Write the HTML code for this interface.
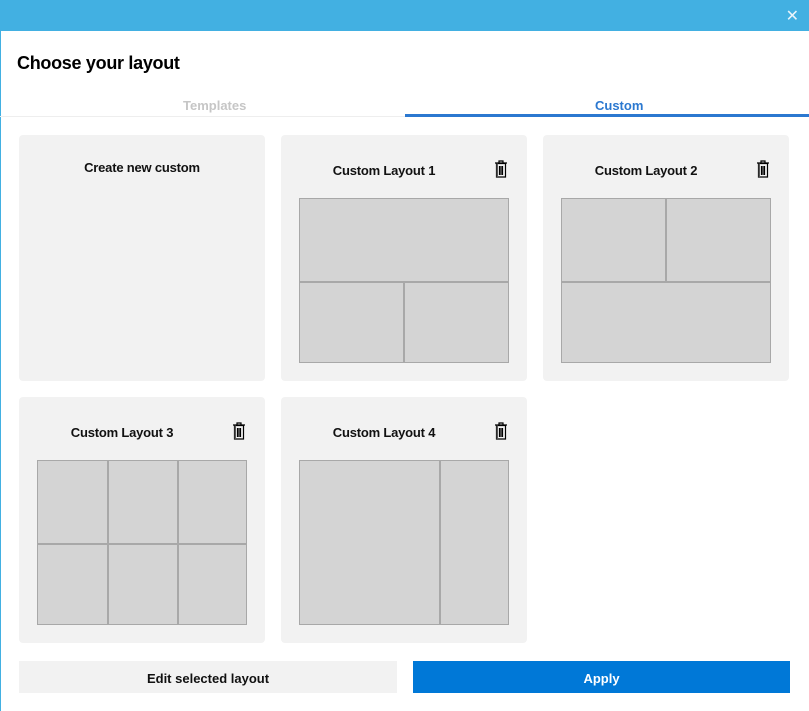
<!DOCTYPE html>
<html><head><style>
body{margin:0;width:809px;height:711px;position:relative;background:#fff;font-family:"Liberation Sans",sans-serif;overflow:hidden}
.bar{position:absolute;left:0;top:0;width:809px;height:31px;background:#42b0e2}
.lb{position:absolute;left:0;top:31px;width:1px;height:680px;background:#42b0e2}
.x{position:absolute;right:10px;top:6px;color:#e8f4fb;font-size:16px}
h1{position:absolute;left:17px;top:53px;margin:0;font-size:18px;font-weight:bold;color:#000;letter-spacing:-0.3px}
.tab{position:absolute;top:98px;font-size:13px;font-weight:bold}
.card{position:absolute;width:246px;height:246px;background:#f2f2f2;border-radius:4px}
.t{position:absolute;left:0;width:206px;text-align:center;top:28px;font-size:13px;font-weight:bold;color:#111;letter-spacing:-0.2px}
.g{position:absolute;left:18px;top:63px;width:210px;height:165px;background:#d4d4d4;border:1px solid #a8a8a8;box-sizing:border-box}
.g i{position:absolute;background:#a8a8a8}
.tr{position:absolute;left:212px;top:25px}
.btn{position:absolute;top:661px;height:32px;line-height:35px;text-align:center;font-size:13px;font-weight:bold}
</style></head><body>
<div class="bar"></div><div class="lb"></div><div class="x">✕</div>
<h1>Choose your layout</h1>
<div class="tab" style="left:183px;color:#c6c6c6">Templates</div>
<div class="tab" style="left:595px;color:#2b78d0">Custom</div>
<div style="position:absolute;left:0;top:116px;width:405px;height:1px;background:#eee"></div>
<div style="position:absolute;left:405px;top:114px;width:404px;height:3px;background:#2b78d0"></div>

<svg width="0" height="0" style="position:absolute"><defs><g id="tr"><path d="M2 3h12M6 3V1h4v2M3.5 3.5h9V17h-9z M6.5 6v9M8 6v9M9.5 6v9" fill="none" stroke="#000" stroke-width="1.2"/><rect x="3.5" y="3.5" width="1.5" height="13.5" fill="#555"/></g></defs></svg>

<div class="card" style="left:19px;top:135px"><div class="t" style="top:25px;width:246px">Create new custom</div></div>

<div class="card" style="left:281px;top:135px"><div class="t">Custom Layout 1</div><svg class="tr" width="16" height="18"><use href="#tr"/></svg>
<div class="g"><i style="left:0;top:82px;width:208px;height:2px"></i><i style="left:103px;top:83px;width:2px;height:80px"></i></div></div>

<div class="card" style="left:543px;top:135px"><div class="t">Custom Layout 2</div><svg class="tr" width="16" height="18"><use href="#tr"/></svg>
<div class="g"><i style="left:0;top:82px;width:208px;height:2px"></i><i style="left:103px;top:0;width:2px;height:83px"></i></div></div>

<div class="card" style="left:19px;top:397px"><div class="t">Custom Layout 3</div><svg class="tr" width="16" height="18"><use href="#tr"/></svg>
<div class="g"><i style="left:0;top:82px;width:208px;height:2px"></i><i style="left:69px;top:0;width:2px;height:163px"></i><i style="left:139px;top:0;width:2px;height:163px"></i></div></div>

<div class="card" style="left:281px;top:397px"><div class="t">Custom Layout 4</div><svg class="tr" width="16" height="18"><use href="#tr"/></svg>
<div class="g"><i style="left:139px;top:0;width:2px;height:163px"></i></div></div>

<div class="btn" style="left:19px;width:378px;background:#f2f2f2;color:#111">Edit selected layout</div>
<div class="btn" style="left:413px;width:377px;background:#0078d7;color:#fff">Apply</div>
</body></html>
